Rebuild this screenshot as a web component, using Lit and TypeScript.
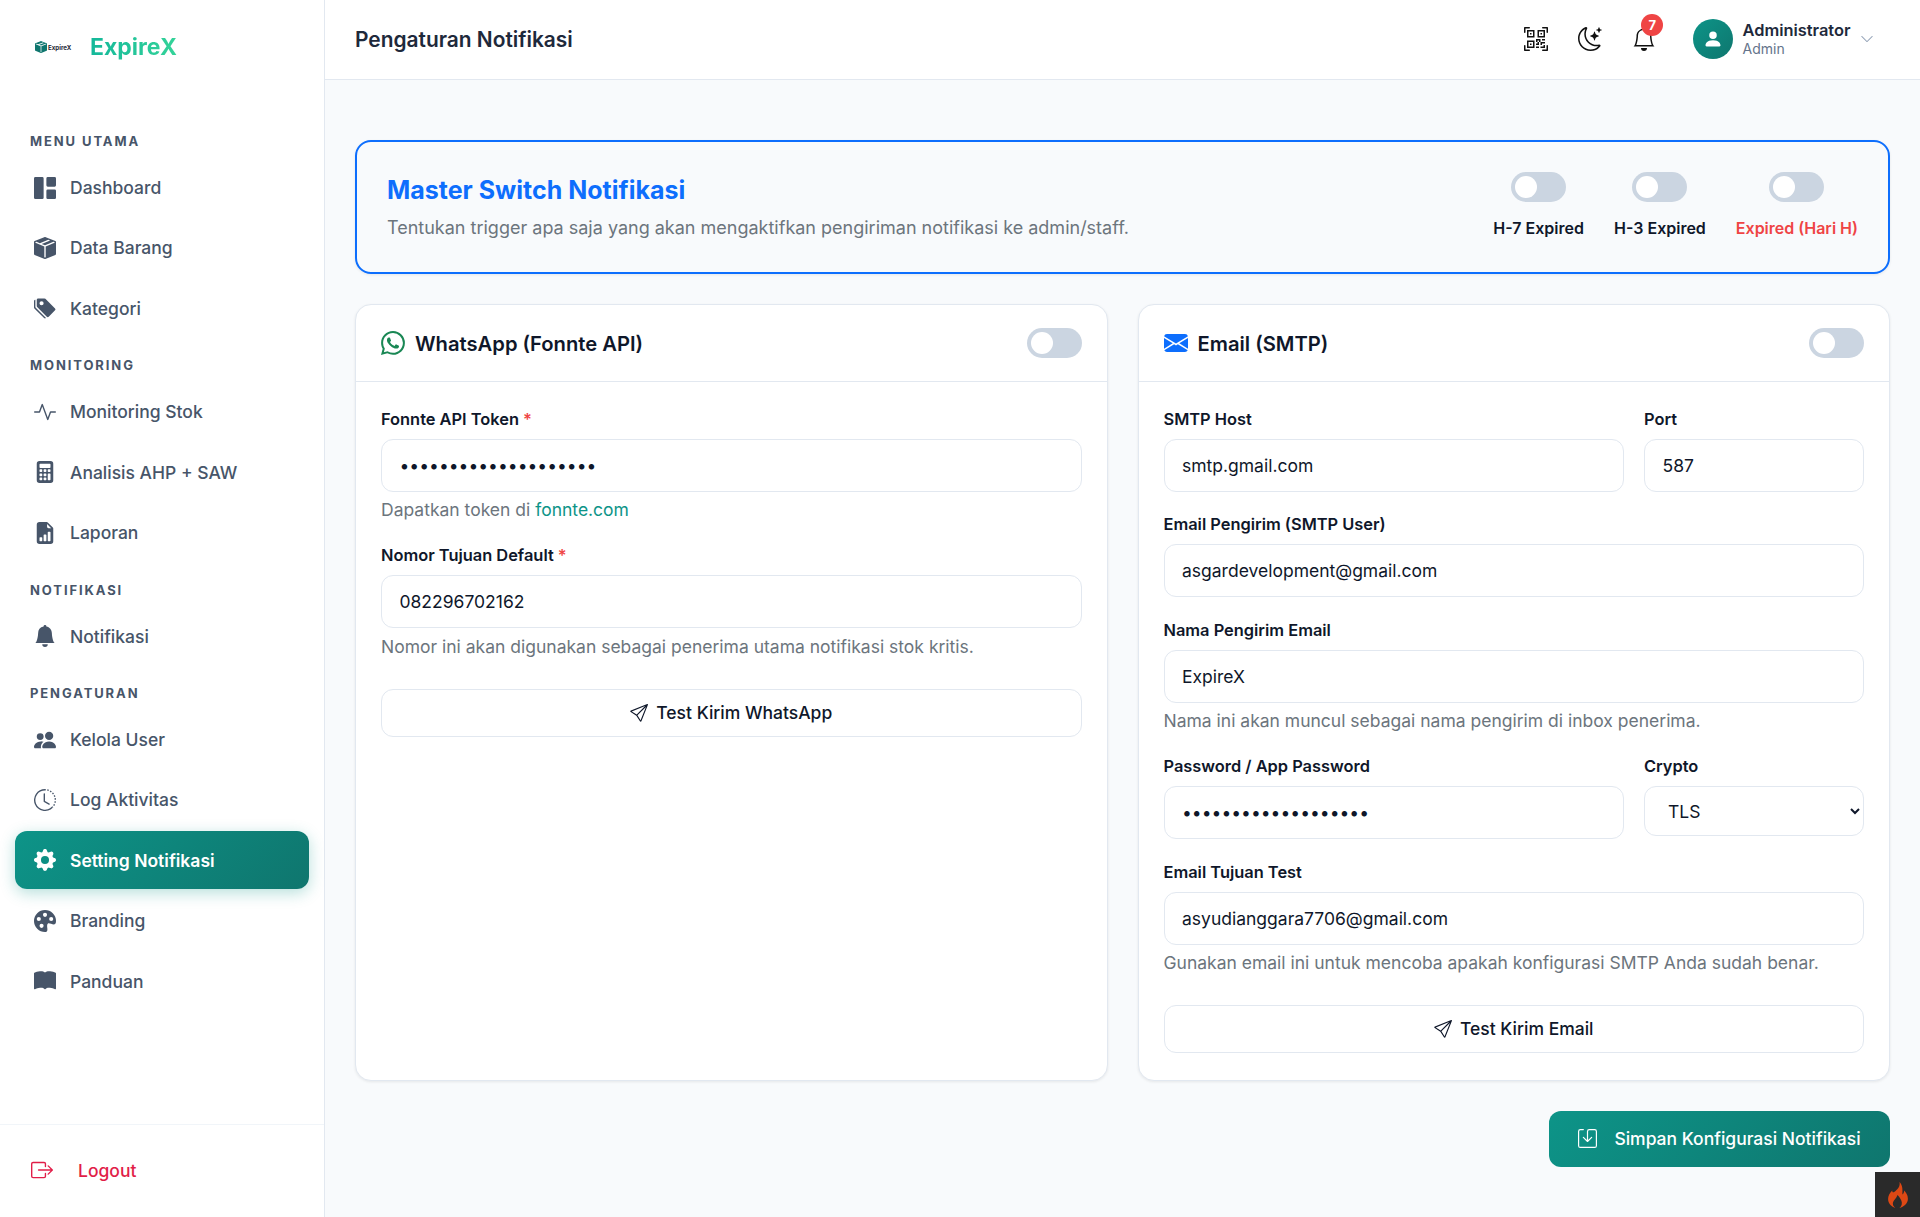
import { html, css, svg, LitElement } from 'lit';
import { customElement } from 'lit/decorators.js';

// bootstrap-icons style paths, 16x16 grid
const ICONS: Record<string, string[]> = {
  dashboard: ['M0 1a1 1 0 0 1 1-1h5a1 1 0 0 1 1 1v14a1 1 0 0 1-1 1H1a1 1 0 0 1-1-1zm9 0a1 1 0 0 1 1-1h5a1 1 0 0 1 1 1v5a1 1 0 0 1-1 1h-5a1 1 0 0 1-1-1zm0 9a1 1 0 0 1 1-1h5a1 1 0 0 1 1 1v5a1 1 0 0 1-1 1h-5a1 1 0 0 1-1-1z'],
  box: ['M15.528 2.973a.75.75 0 0 1 .472.696v8.662a.75.75 0 0 1-.472.696l-7.25 2.9a.75.75 0 0 1-.557 0l-7.25-2.9A.75.75 0 0 1 0 12.331V3.669a.75.75 0 0 1 .471-.696L7.443.184l.01-.003.268-.108a.75.75 0 0 1 .558 0l.269.108.01.003zM10.404 2 4.25 4.461 1.846 3.5 1 3.839v.4l6.5 2.6v7.922l.5.2.5-.2V6.84l6.5-2.6v-.4l-.846-.339L8 5.961 5.596 5l6.154-2.461z'],
  tags: ['M2 2a1 1 0 0 1 1-1h4.586a1 1 0 0 1 .707.293l7 7a1 1 0 0 1 0 1.414l-4.586 4.586a1 1 0 0 1-1.414 0l-7-7A1 1 0 0 1 2 6.586zm3.5 4a1.5 1.5 0 1 0 0-3 1.5 1.5 0 0 0 0 3', 'M1.293 7.793A1 1 0 0 1 1 7.086V2a1 1 0 0 0-1 1v4.586a1 1 0 0 0 .293.707l7 7a1 1 0 0 0 1.414 0l.043-.043z'],
  activity: ['M6 2a.5.5 0 0 1 .47.33L10 12.036l1.53-4.208A.5.5 0 0 1 12 7.5h3.5a.5.5 0 0 1 0 1h-3.15l-1.88 5.17a.5.5 0 0 1-.94 0L6 3.964 4.47 8.171A.5.5 0 0 1 4 8.5H.5a.5.5 0 0 1 0-1h3.15l1.88-5.17A.5.5 0 0 1 6 2'],
  calculator: ['M2 2a2 2 0 0 1 2-2h8a2 2 0 0 1 2 2v12a2 2 0 0 1-2 2H4a2 2 0 0 1-2-2zm2 .5v2a.5.5 0 0 0 .5.5h7a.5.5 0 0 0 .5-.5v-2a.5.5 0 0 0-.5-.5h-7a.5.5 0 0 0-.5.5m0 4v1a.5.5 0 0 0 .5.5h1a.5.5 0 0 0 .5-.5v-1a.5.5 0 0 0-.5-.5h-1a.5.5 0 0 0-.5.5M4.5 9a.5.5 0 0 0-.5.5v1a.5.5 0 0 0 .5.5h1a.5.5 0 0 0 .5-.5v-1a.5.5 0 0 0-.5-.5zM4 12.5v1a.5.5 0 0 0 .5.5h1a.5.5 0 0 0 .5-.5v-1a.5.5 0 0 0-.5-.5h-1a.5.5 0 0 0-.5.5M7.5 6a.5.5 0 0 0-.5.5v1a.5.5 0 0 0 .5.5h1a.5.5 0 0 0 .5-.5v-1a.5.5 0 0 0-.5-.5zM7 9.5v1a.5.5 0 0 0 .5.5h1a.5.5 0 0 0 .5-.5v-1a.5.5 0 0 0-.5-.5h-1a.5.5 0 0 0-.5.5m.5 2.5a.5.5 0 0 0-.5.5v1a.5.5 0 0 0 .5.5h1a.5.5 0 0 0 .5-.5v-1a.5.5 0 0 0-.5-.5zM10 6.5v1a.5.5 0 0 0 .5.5h1a.5.5 0 0 0 .5-.5v-1a.5.5 0 0 0-.5-.5h-1a.5.5 0 0 0-.5.5m.5 2.5a.5.5 0 0 0-.5.5v4a.5.5 0 0 0 .5.5h1a.5.5 0 0 0 .5-.5v-4a.5.5 0 0 0-.5-.5z'],
  report: ['M9.293 0H4a2 2 0 0 0-2 2v12a2 2 0 0 0 2 2h8a2 2 0 0 0 2-2V4.707A1 1 0 0 0 13.707 4L10 .293A1 1 0 0 0 9.293 0M9.5 3.5v-2l3 3h-2a1 1 0 0 1-1-1m.5 10v-6a.5.5 0 0 1 .5-.5h1a.5.5 0 0 1 .5.5v6a.5.5 0 0 1-.5.5h-1a.5.5 0 0 1-.5-.5m-2.5.5a.5.5 0 0 1-.5-.5v-4a.5.5 0 0 1 .5-.5h1a.5.5 0 0 1 .5.5v4a.5.5 0 0 1-.5.5zm-3 0a.5.5 0 0 1-.5-.5v-2a.5.5 0 0 1 .5-.5h1a.5.5 0 0 1 .5.5v2a.5.5 0 0 1-.5.5z'],
  bellFill: ['M8 16a2 2 0 0 0 2-2H6a2 2 0 0 0 2 2m.995-14.901a1 1 0 1 0-1.99 0A5 5 0 0 0 3 6c0 1.098-.5 6-2 7h14c-1.5-1-2-5.902-2-7 0-2.42-1.72-4.44-4.005-4.901'],
  people: ['M7 14s-1 0-1-1 1-4 5-4 5 3 5 4-1 1-1 1zm4-6a3 3 0 1 0 0-6 3 3 0 0 0 0 6m-5.784 6A2.24 2.24 0 0 1 5 13c0-1.355.68-2.75 1.936-3.72A6.3 6.3 0 0 0 5 9c-4 0-5 3-5 4s1 1 1 1zM4.5 8a2.5 2.5 0 1 0 0-5 2.5 2.5 0 0 0 0 5'],
  history: ['M8.515 1.019A7 7 0 0 0 8 1V0a8 8 0 0 1 .589.022zm2.004.45a7 7 0 0 0-.985-.299l.219-.976q.576.129 1.126.342zm1.37.71a7 7 0 0 0-.439-.27l.493-.87a8 8 0 0 1 .979.654l-.615.789a7 7 0 0 0-.418-.302zm1.834 1.79a7 7 0 0 0-.653-.796l.724-.69q.406.429.747.91zm.744 1.352a7 7 0 0 0-.214-.468l.893-.45a8 8 0 0 1 .45 1.088l-.95.313a7 7 0 0 0-.179-.483m.53 2.507a7 7 0 0 0-.1-1.025l.985-.17q.1.58.116 1.17zm-.131 1.538q.05-.254.081-.51l.993.123a8 8 0 0 1-.23 1.155l-.964-.267q.069-.247.12-.501m-.952 2.379q.276-.436.486-.908l.914.405q-.24.54-.555 1.038zm-.964 1.205q.183-.183.35-.378l.758.653a8 8 0 0 1-.401.432z', 'M8 1a7 7 0 1 0 4.95 11.95l.707.707A8.001 8.001 0 1 1 8 0z', 'M7.5 3a.5.5 0 0 1 .5.5v5.21l3.248 1.856a.5.5 0 0 1-.496.868l-3.5-2A.5.5 0 0 1 7 9V3.5a.5.5 0 0 1 .5-.5'],
  gear: ['M9.405 1.05c-.413-1.4-2.397-1.4-2.81 0l-.1.34a1.464 1.464 0 0 1-2.105.872l-.31-.17c-1.283-.698-2.686.705-1.987 1.987l.169.311c.446.82.023 1.841-.872 2.105l-.34.1c-1.4.413-1.4 2.397 0 2.81l.34.1a1.464 1.464 0 0 1 .872 2.105l-.17.31c-.698 1.283.705 2.686 1.987 1.987l.311-.169a1.464 1.464 0 0 1 2.105.872l.1.34c.413 1.4 2.397 1.4 2.81 0l.1-.34a1.464 1.464 0 0 1 2.105-.872l.31.17c1.283.698 2.686-.705 1.987-1.987l-.169-.311a1.464 1.464 0 0 1 .872-2.105l.34-.1c1.4-.413 1.4-2.397 0-2.81l-.34-.1a1.464 1.464 0 0 1-.872-2.105l.17-.31c.698-1.283-.705-2.686-1.987-1.987l-.311.169a1.464 1.464 0 0 1-2.105-.872zM8 10.93a2.929 2.929 0 1 1 0-5.86 2.929 2.929 0 0 1 0 5.858z'],
  palette: ['M12.433 10.07C14.133 10.585 16 11.15 16 8a8 8 0 1 0-8 8c1.996 0 1.826-1.504 1.649-3.08-.124-1.101-.252-2.237.351-2.92.465-.527 1.42-.237 2.433.07M8 5a1.5 1.5 0 1 1 0-3 1.5 1.5 0 0 1 0 3m4.5 3a1.5 1.5 0 1 1 0-3 1.5 1.5 0 0 1 0 3M5 6.5a1.5 1.5 0 1 1-3 0 1.5 1.5 0 0 1 3 0m.5 6.5a1.5 1.5 0 1 1 0-3 1.5 1.5 0 0 1 0 3'],
  book: ['M8 1.783C7.015.936 5.587.81 4.287.94c-1.514.153-3.042.672-3.994 1.105A.5.5 0 0 0 0 2.5v11a.5.5 0 0 0 .707.455c.882-.4 2.303-.881 3.68-1.02 1.409-.142 2.59.087 3.223.877a.5.5 0 0 0 .78 0c.633-.79 1.814-1.019 3.222-.877 1.378.139 2.8.62 3.681 1.02A.5.5 0 0 0 16 13.5v-11a.5.5 0 0 0-.293-.455c-.952-.433-2.48-.952-3.994-1.105C10.413.809 8.985.936 8 1.783'],
  logout: ['M10 12.5a.5.5 0 0 1-.5.5h-8a.5.5 0 0 1-.5-.5v-9a.5.5 0 0 1 .5-.5h8a.5.5 0 0 1 .5.5v2a.5.5 0 0 0 1 0v-2A1.5 1.5 0 0 0 9.5 2h-8A1.5 1.5 0 0 0 0 3.5v9A1.5 1.5 0 0 0 1.5 14h8a1.5 1.5 0 0 0 1.5-1.5v-2a.5.5 0 0 0-1 0z', 'M15.854 8.354a.5.5 0 0 0 0-.708l-3-3a.5.5 0 0 0-.708.708L14.293 7.5H5.5a.5.5 0 0 0 0 1h8.793l-2.147 2.146a.5.5 0 0 0 .708.708z'],
  qr: ['M0 .5A.5.5 0 0 1 .5 0h3a.5.5 0 0 1 0 1H1v2.5a.5.5 0 0 1-1 0zm12 0a.5.5 0 0 1 .5-.5h3a.5.5 0 0 1 .5.5v3a.5.5 0 0 1-1 0V1h-2.5a.5.5 0 0 1-.5-.5M.5 12a.5.5 0 0 1 .5.5V15h2.5a.5.5 0 0 1 0 1h-3a.5.5 0 0 1-.5-.5v-3a.5.5 0 0 1 .5-.5m15 0a.5.5 0 0 1 .5.5v3a.5.5 0 0 1-.5.5h-3a.5.5 0 0 1 0-1H15v-2.5a.5.5 0 0 1 .5-.5M4 4h1v1H4z', 'M7 2H2v5h5zM3 3h3v3H3zm2 8H4v1h1z', 'M7 9H2v5h5zm-4 1h3v3H3zm8-6h1v1h-1z', 'M9 2h5v5H9zm1 1v3h3V3zM8 8v2h1v1H8v1h2v-2h1v2h1v-1h2v-1h-3V8zm2 2H9V9h1zm4 2h-1v1h-2v1h3zm-4 2v-1H8v1z', 'M12 9h2V8h-2z'],
  moon: ['M6 .278a.77.77 0 0 1 .08.858 7.2 7.2 0 0 0-.878 3.46c0 4.021 3.278 7.277 7.318 7.277q.792-.001 1.533-.16a.79.79 0 0 1 .81.316.73.73 0 0 1-.031.893A8.35 8.35 0 0 1 8.344 16C3.734 16 0 12.286 0 7.71 0 4.266 2.114 1.312 5.124.06A.75.75 0 0 1 6 .278M4.858 1.311A7.27 7.27 0 0 0 1.025 7.71c0 4.02 3.279 7.276 7.319 7.276a7.32 7.32 0 0 0 5.205-2.162q-.506.063-1.029.063c-4.61 0-8.343-3.714-8.343-8.29 0-1.167.242-2.278.681-3.286', 'M10.794 3.148a.217.217 0 0 1 .412 0l.387 1.162c.173.518.579.924 1.097 1.097l1.162.387a.217.217 0 0 1 0 .412l-1.162.387a1.73 1.73 0 0 0-1.097 1.097l-.387 1.162a.217.217 0 0 1-.412 0l-.387-1.162A1.73 1.73 0 0 0 9.31 6.593l-1.162-.387a.217.217 0 0 1 0-.412l1.162-.387a1.73 1.73 0 0 0 1.097-1.097zM13.863.099a.145.145 0 0 1 .274 0l.258.774c.115.346.386.617.732.732l.774.258a.145.145 0 0 1 0 .274l-.774.258a1.16 1.16 0 0 0-.732.732l-.258.774a.145.145 0 0 1-.274 0l-.258-.774a1.16 1.16 0 0 0-.732-.732l-.774-.258a.145.145 0 0 1 0-.274l.774-.258c.346-.115.617-.386.732-.732z'],
  bell: ['M8 16a2 2 0 0 0 2-2H6a2 2 0 0 0 2 2M8 1.918l-.797.161A4 4 0 0 0 4 6c0 .628-.134 2.197-.459 3.742-.16.767-.376 1.566-.663 2.258h10.244c-.287-.692-.502-1.49-.663-2.258C12.134 8.197 12 6.628 12 6a4 4 0 0 0-3.203-3.92zM14.22 12c.223.447.481.801.78 1H1c.299-.199.557-.553.78-1C2.68 10.2 3 6.88 3 6c0-2.42 1.72-4.44 4.005-4.901a1 1 0 1 1 1.99 0A5 5 0 0 1 13 6c0 .88.32 4.2 1.22 6'],
  person: ['M3 14s-1 0-1-1 1-4 6-4 6 3 6 4-1 1-1 1zm5-6a3 3 0 1 0 0-6 3 3 0 0 0 0 6'],
  chevron: ['M1.646 4.646a.5.5 0 0 1 .708 0L8 10.293l5.646-5.647a.5.5 0 0 1 .708.708l-6 6a.5.5 0 0 1-.708 0l-6-6a.5.5 0 0 1 0-.708'],
  whatsapp: ['M13.601 2.326A7.85 7.85 0 0 0 7.994 0C3.627 0 .068 3.558.064 7.926c0 1.399.366 2.76 1.057 3.965L0 16l4.204-1.102a7.9 7.9 0 0 0 3.79.965h.004c4.368 0 7.926-3.558 7.93-7.93A7.9 7.9 0 0 0 13.6 2.326zM7.994 14.521a6.6 6.6 0 0 1-3.356-.92l-.24-.144-2.494.654.666-2.433-.156-.251a6.56 6.56 0 0 1-1.007-3.505c0-3.626 2.957-6.584 6.591-6.584a6.56 6.56 0 0 1 4.66 1.931 6.56 6.56 0 0 1 1.928 4.66c-.004 3.639-2.961 6.592-6.592 6.592m3.615-4.934c-.197-.099-1.17-.578-1.353-.646-.182-.065-.315-.099-.445.099-.133.197-.513.646-.627.775-.114.133-.232.148-.43.05-.197-.1-.836-.308-1.592-.985-.59-.525-.985-1.175-1.103-1.372-.114-.198-.011-.304.088-.403.087-.088.197-.232.296-.346.1-.114.133-.198.198-.33.065-.134.034-.248-.015-.347-.05-.099-.445-1.076-.612-1.47-.16-.389-.323-.335-.445-.34-.114-.007-.247-.007-.38-.007a.73.73 0 0 0-.529.247c-.182.198-.691.677-.691 1.654s.71 1.916.81 2.049c.098.133 1.394 2.132 3.383 2.992.47.205.84.326 1.129.418.475.152.904.129 1.246.08.38-.058 1.171-.48 1.338-.943.164-.464.164-.86.114-.943-.049-.084-.182-.133-.38-.232'],
  envelope: ['M.05 3.555A2 2 0 0 1 2 2h12a2 2 0 0 1 1.95 1.555L8 8.414zM0 4.697v7.104l5.803-3.558zM6.761 8.83l-6.57 4.027A2 2 0 0 0 2 14h12a2 2 0 0 0 1.808-1.144l-6.57-4.027L8 9.586zm3.436-.586L16 11.801V4.697z'],
  send: ['M15.854.146a.5.5 0 0 1 .11.54l-5.819 14.547a.75.75 0 0 1-1.329.124l-3.178-4.995L.643 7.184a.75.75 0 0 1 .124-1.33L15.314.037a.5.5 0 0 1 .54.11ZM6.636 10.07l2.761 4.338L14.13 2.576zm6.787-8.201L1.591 6.602l4.339 2.76z'],
  save: ['M2 1a1 1 0 0 0-1 1v12a1 1 0 0 0 1 1h12a1 1 0 0 0 1-1V2a1 1 0 0 0-1-1H9.5a1 1 0 0 0-1 1v7.293l2.646-2.647a.5.5 0 0 1 .708.708l-3.5 3.5a.5.5 0 0 1-.708 0l-3.5-3.5a.5.5 0 1 1 .708-.708L7.5 9.293V2a2 2 0 0 1 2-2H14a2 2 0 0 1 2 2v12a2 2 0 0 1-2 2H2a2 2 0 0 1-2-2V2a2 2 0 0 1 2-2h2.5a.5.5 0 0 1 0 1z'],
  flame: ['M8.9 0c.6 2.6-.9 4.1-2.4 5.5C5.1 6.8 4.6 6.6 4.4 5.2 2.9 6.7 1.9 8.5 1.9 10.5c0 2.5 1.8 4.5 4.4 5.5-1.3-1.1-1.8-2.4-1.3-3.7.5-1.3 2-2.3 2.7-4.3 1 1.1 1.9 2.3 2.4 3.5.6 1.6.2 3.3-1.2 4.5 2.7-.7 5.2-2.7 5.2-5.7 0-2.2-1.2-3.8-2.4-5 .1 1-.2 1.9-1 2.4C10.8 5 11 2 8.9 0z'],
};

const icon = (name: string) => html`<svg viewBox="0 0 16 16" fill="currentColor" aria-hidden="true">
  ${ICONS[name].map(d => svg`<path d=${d}></path>`)}
</svg>`;

const MENU = [
  { title: 'MENU UTAMA', items: [['dashboard', 'Dashboard'], ['box', 'Data Barang'], ['tags', 'Kategori']] },
  { title: 'MONITORING', items: [['activity', 'Monitoring Stok'], ['calculator', 'Analisis AHP + SAW'], ['report', 'Laporan']] },
  { title: 'NOTIFIKASI', items: [['bellFill', 'Notifikasi']] },
  { title: 'PENGATURAN', items: [['people', 'Kelola User'], ['history', 'Log Aktivitas'], ['gear', 'Setting Notifikasi'], ['palette', 'Branding'], ['book', 'Panduan']] },
];

@customElement('app-root')
export class AppRoot extends LitElement {
  toggle() {
    return html`<label class="switch"><input type="checkbox" /><span></span></label>`;
  }

  field(label: string, value: string, type = 'text', required = false) {
    return html`
      <div class="field">
        <label class="lbl">${label}${required ? html` <span class="req">*</span>` : ''}</label>
        <input class="ctl" type=${type} .value=${value} />
      </div>
    `;
  }

  renderSidebar() {
    return html`
      <aside class="sidebar">
        <div class="brand">
          <div class="logo">${icon('box')}<span>ExpireX</span></div>
          <span class="brand-name">ExpireX</span>
        </div>
        <nav class="nav">
          ${MENU.map(sec => html`
            <div class="nav-title">${sec.title}</div>
            ${sec.items.map(([ic, text]) => html`
              <a class="nav-item ${text === 'Setting Notifikasi' ? 'active' : ''}">${icon(ic)}<span>${text}</span></a>
            `)}
          `)}
        </nav>
        <a class="logout">${icon('logout')}<span>Logout</span></a>
      </aside>
    `;
  }

  renderTopbar() {
    return html`
      <header class="topbar">
        <h1>Pengaturan Notifikasi</h1>
        <div class="top-actions">
          <button class="top-btn">${icon('qr')}</button>
          <button class="top-btn">${icon('moon')}</button>
          <button class="top-btn">${icon('bell')}<span class="badge">7</span></button>
          <div class="user">
            <div class="avatar">${icon('person')}</div>
            <div class="user-text">
              <div class="user-name">Administrator</div>
              <div class="user-role">Admin</div>
            </div>
            ${icon('chevron')}
          </div>
        </div>
      </header>
    `;
  }

  render() {
    return html`
      ${this.renderSidebar()}
      <div class="page">
        ${this.renderTopbar()}
        <main class="content">
          <section class="master">
            <div>
              <h2>Master Switch Notifikasi</h2>
              <p>Tentukan trigger apa saja yang akan mengaktifkan pengiriman notifikasi ke admin/staff.</p>
            </div>
            <div class="triggers">
              <div class="trigger">${this.toggle()}<span>H-7 Expired</span></div>
              <div class="trigger">${this.toggle()}<span>H-3 Expired</span></div>
              <div class="trigger danger">${this.toggle()}<span>Expired (Hari H)</span></div>
            </div>
          </section>

          <div class="cards">
            <section class="card">
              <div class="card-head">
                <div class="card-title wa">${icon('whatsapp')}<h3>WhatsApp (Fonnte API)</h3></div>
                ${this.toggle()}
              </div>
              <div class="card-body">
                ${this.field('Fonnte API Token', 'abcdefghijklmnopqrst', 'password', true)}
                <p class="help">Dapatkan token di <a>fonnte.com</a></p>
                ${this.field('Nomor Tujuan Default', '082296702162', 'text', true)}
                <p class="help">Nomor ini akan digunakan sebagai penerima utama notifikasi stok kritis.</p>
                <button class="test-btn">${icon('send')}Test Kirim WhatsApp</button>
              </div>
            </section>

            <section class="card">
              <div class="card-head">
                <div class="card-title mail">${icon('envelope')}<h3>Email (SMTP)</h3></div>
                ${this.toggle()}
              </div>
              <div class="card-body">
                <div class="row">
                  ${this.field('SMTP Host', 'smtp.gmail.com')}
                  ${this.field('Port', '587')}
                </div>
                ${this.field('Email Pengirim (SMTP User)', 'asgardevelopment@gmail.com')}
                ${this.field('Nama Pengirim Email', 'ExpireX')}
                <p class="help">Nama ini akan muncul sebagai nama pengirim di inbox penerima.</p>
                <div class="row">
                  ${this.field('Password / App Password', 'abcdefghijklmnopqrs', 'password')}
                  <div class="field">
                    <label class="lbl">Crypto</label>
                    <select class="sel"><option>TLS</option><option>SSL</option></select>
                  </div>
                </div>
                ${this.field('Email Tujuan Test', 'asyudianggara7706@gmail.com')}
                <p class="help">Gunakan email ini untuk mencoba apakah konfigurasi SMTP Anda sudah benar.</p>
                <button class="test-btn">${icon('send')}Test Kirim Email</button>
              </div>
            </section>
          </div>

          <div class="actions">
            <button class="save-btn">${icon('save')}Simpan Konfigurasi Notifikasi</button>
          </div>
        </main>
      </div>
      <div class="debug-bar">${icon('flame')}</div>
    `;
  }

  static styles = css`
    :host {
      display: flex;
      height: 100vh;
      overflow: hidden;
      position: relative;
      font-family: Inter, 'Noto Sans', sans-serif;
      font-size: 17.5px;
      color: #0f172a;
      background: #f8fafc;
    }
    * { box-sizing: border-box; }
    h1, h2, h3, p { margin: 0; }
    svg { display: block; flex: none; }

    /* sidebar */
    .sidebar {
      width: 325px;
      flex: none;
      display: flex;
      flex-direction: column;
      background: #fff;
      border-right: 1px solid #e2e8f0;
    }
    .brand {
      height: 92px;
      padding: 2px 30px 0;
      display: flex;
      align-items: center;
    }
    .logo {
      width: 60px;
      display: flex;
      align-items: center;
      gap: 1px;
      padding-left: 5px;
      color: #0f766e;
    }
    .logo svg { width: 12px; height: 12px; }
    .logo span { font-size: 6.2px; font-weight: 700; color: #1f2937; }
    .brand-name {
      font-size: 23px;
      font-weight: 700;
      background: linear-gradient(90deg, #14b89a, #34d399);
      -webkit-background-clip: text;
      background-clip: text;
      color: transparent;
    }
    .nav { padding: 24px 15px 0; flex: 1; }
    .nav-title {
      margin: 20px 0 9.5px 15px;
      font-size: 13px;
      line-height: 16px;
      font-weight: 700;
      letter-spacing: 1.9px;
      color: #475569;
    }
    .nav-title:first-child { margin-top: 17px; }
    .nav-item {
      display: flex;
      align-items: center;
      gap: 14px;
      height: 58px;
      margin-bottom: 2.4px;
      padding-left: 19px;
      border-radius: 12px;
      color: #475569;
      font-weight: 500;
    }
    .nav-item svg { width: 22px; height: 22px; }
    .nav-item.active {
      color: #fff;
      font-weight: 600;
      background: linear-gradient(135deg, #0d9488, #0f766e);
      box-shadow: 0 4px 15px rgba(13, 148, 136, 0.3);
    }
    .logout {
      height: 93px;
      flex: none;
      padding: 0 0 2px 31px;
      display: flex;
      align-items: center;
      gap: 25px;
      border-top: 1px solid #f1f5f9;
      color: #e11d48;
      font-weight: 500;
    }
    .logout svg { width: 22px; height: 22px; }

    /* topbar */
    .page { flex: 1; min-width: 0; display: flex; flex-direction: column; }
    .topbar {
      height: 80px;
      flex: none;
      display: flex;
      align-items: center;
      justify-content: space-between;
      padding: 0 46px 1px 30px;
      background: #fff;
      border-bottom: 1px solid #e2e8f0;
    }
    .topbar h1 { font-size: 20.9px; font-weight: 600; color: #1e293b; }
    .top-actions { display: flex; align-items: center; gap: 30px; }
    .top-btn {
      position: relative;
      width: 24px;
      height: 24px;
      padding: 0;
      border: 0;
      background: none;
      color: #111;
    }
    .top-btn svg { width: 24px; height: 24px; }
    .badge {
      position: absolute;
      top: -13px;
      right: -7px;
      width: 22px;
      height: 22px;
      border-radius: 50%;
      background: #ef4444;
      color: #fff;
      font: 700 13px/22px Inter, sans-serif;
      text-align: center;
    }
    .user { display: flex; align-items: center; margin-left: 6.4px; }
    .avatar {
      width: 40px;
      height: 40px;
      border-radius: 50%;
      display: flex;
      align-items: center;
      justify-content: center;
      color: #fff;
      background: linear-gradient(135deg, #0d9488, #0f766e);
    }
    .avatar svg { width: 20px; height: 20px; }
    .user-text { margin: 0 9.5px 0 10px; }
    .user-name { font-size: 16.4px; line-height: 20px; font-weight: 600; color: #1e293b; }
    .user-role { font-size: 14px; line-height: 18px; color: #64748b; }
    .user > svg { width: 14px; height: 14px; color: #94a3b8; }

    /* content */
    .content { flex: 1; padding: 60px 30px 0; }
    .master {
      height: 134px;
      display: flex;
      align-items: center;
      justify-content: space-between;
      padding: 0 30px;
      border: 2px solid #0d6efd;
      border-radius: 16px;
      box-shadow: 0 1px 3px rgba(0, 0, 0, 0.08);
    }
    .master h2 { font-size: 25px; line-height: 32px; font-weight: 700; color: #0d6efd; margin-bottom: 9px; }
    .master p { font-size: 18px; line-height: 26px; color: #6c757d; }
    .triggers { display: flex; gap: 30px; margin-bottom: 5px; }
    .trigger { display: flex; flex-direction: column; align-items: center; gap: 16px; }
    .trigger > span { font-size: 16px; line-height: 20px; font-weight: 600; }
    .trigger.danger > span { color: #ef4444; }

    .switch { display: block; position: relative; width: 55px; height: 30px; flex: none; }
    .switch input { position: absolute; opacity: 0; inset: 0; margin: 0; }
    .switch span {
      position: absolute;
      inset: 0;
      border-radius: 15px;
      background: #cbd5e1;
    }
    .switch span::after {
      content: '';
      position: absolute;
      top: 4px;
      left: 4px;
      width: 22px;
      height: 22px;
      border-radius: 50%;
      background: #fff;
    }
    .switch input:checked + span { background: #0d9488; }
    .switch input:checked + span::after { left: 29px; }

    .cards { display: grid; grid-template-columns: 1fr 1fr; gap: 30px; margin-top: 30px; }
    .card {
      background: #fff;
      border: 1px solid #e2e8f0;
      border-radius: 16px;
      box-shadow: 0 1px 3px rgba(0, 0, 0, 0.08);
    }
    .card-head {
      height: 77px;
      display: flex;
      align-items: center;
      justify-content: space-between;
      padding: 0 25px;
      border-bottom: 1px solid #e2e8f0;
    }
    .card-title { display: flex; align-items: center; gap: 10px; }
    .card-title svg { width: 24px; height: 24px; }
    .card-title.wa svg { color: #198754; }
    .card-title.mail svg { color: #0d6efd; }
    .card-title h3 { font-size: 20.2px; font-weight: 600; }
    .card-body { padding: 27px 25px 27px; display: flex; flex-direction: column; }

    .row { display: grid; grid-template-columns: 1fr 220px; column-gap: 20px; align-items: start; }
    .field { margin-bottom: 22.4px; }
    .lbl {
      display: block;
      margin-bottom: 10px;
      font-size: 16.4px;
      line-height: 20px;
      font-weight: 600;
    }
    .req { color: #ef4444; }
    .ctl, .sel {
      display: block;
      width: 100%;
      height: 53px;
      padding: 0 17.5px;
      border: 1px solid #e2e8f0;
      border-radius: 12px;
      background: #fff;
      font: 400 17.5px Inter, sans-serif;
      color: #0f172a;
      outline: none;
    }
    .sel { height: 50px; padding-left: 19px; }
    .help { margin: -17px 0 22px; line-height: 26px; color: #6c757d; }
    .help a { color: #0d9488; }
    .test-btn {
      margin-top: 7px;
      height: 48px;
      display: flex;
      align-items: center;
      justify-content: center;
      gap: 8px;
      background: #fff;
      border: 1px solid #e2e8f0;
      border-radius: 12px;
      font: 500 17.5px Inter, sans-serif;
      color: #0f172a;
    }
    .test-btn svg { width: 18px; height: 18px; }

    .actions { display: flex; justify-content: flex-end; margin-top: 30px; }
    .save-btn {
      width: 341px;
      height: 56px;
      display: flex;
      align-items: center;
      justify-content: center;
      gap: 17px;
      border: 0;
      border-radius: 12px;
      color: #fff;
      font: 500 17.5px Inter, sans-serif;
      background: linear-gradient(135deg, #0d9488, #0f766e);
    }
    .save-btn svg { width: 19px; height: 19px; }

    .debug-bar {
      position: absolute;
      right: 0;
      bottom: 0;
      width: 45px;
      height: 45px;
      background: #2a2a2a;
      display: flex;
      align-items: center;
      justify-content: center;
      color: #dd4814;
    }
    .debug-bar svg { width: 26px; height: 26px; }
  `;
}
